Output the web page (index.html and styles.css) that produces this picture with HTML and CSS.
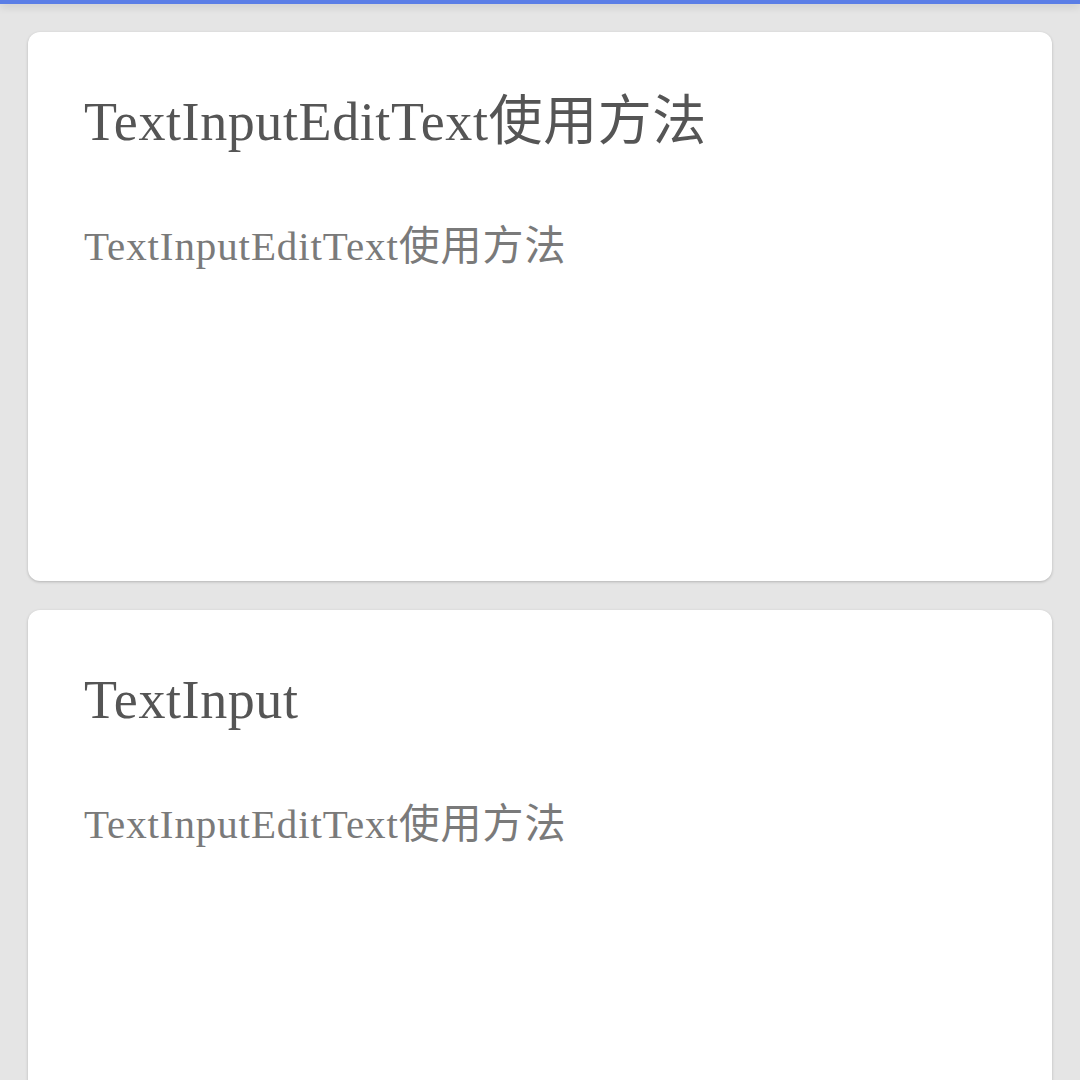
FILE: index.html
```html
<!DOCTYPE html>
<html lang="zh">
<head>
<meta charset="utf-8">
<link rel="stylesheet" href="styles.css">
</head>
<body>
<div class="topbar"></div>
<main class="list">
  <section class="card">
    <h1 class="title">TextInputEditText使用方法</h1>
    <p class="field">TextInputEditText使用方法</p>
  </section>
  <section class="card">
    <h1 class="title">TextInput</h1>
    <p class="field">TextInputEditText使用方法</p>
  </section>
</main>
</body>
</html>
```
FILE: styles.css
```css
html, body {
  margin: 0;
  padding: 0;
  background: #e5e5e5;
  height: 1080px;
  overflow: hidden;
  font-family: "Liberation Serif", "Noto Sans CJK SC", serif;
}
.topbar {
  height: 4px;
  background: #5b7ee6;
  box-shadow: 0 2px 8px rgba(0,0,0,0.18);
  position: relative;
  z-index: 2;
}
.list {
  display: flex;
  flex-direction: column;
  gap: 29px;
  padding: 28px 28px 0 28px;
}
.card {
  background: #ffffff;
  border-radius: 12px;
  box-shadow: 0 1px 3px rgba(0,0,0,0.22);
  height: 549px;
  box-sizing: border-box;
  padding: 59px 56px 0 56px;
}
.title {
  margin: 0;
  font-weight: normal;
  font-size: 54px;
  line-height: 62px;
  letter-spacing: 0.6px;
  color: #555555;
}
.field {
  margin: 69px 0 0 0;
  font-size: 41px;
  line-height: 48px;
  letter-spacing: 0.9px;
  color: #7a7a7a;
}
```
